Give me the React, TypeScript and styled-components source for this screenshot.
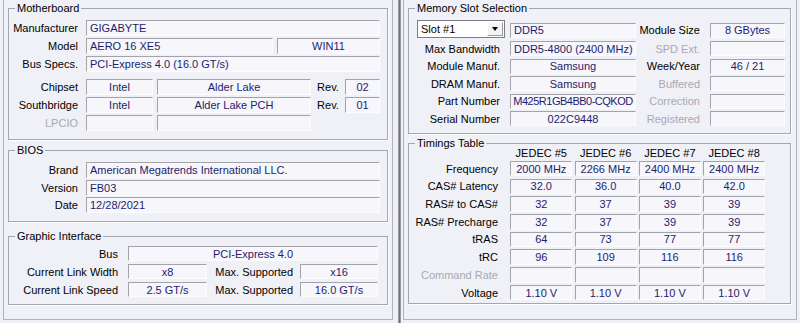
import React from 'react';
import styled, { createGlobalStyle } from 'styled-components';

const GlobalStyle = createGlobalStyle`
  html, body { margin: 0; padding: 0; background: #f0f0f7; }
  body { font-family: "Liberation Sans", Arial, sans-serif; font-size: 11px; color: #000; }
  * { box-sizing: border-box; }
`;

const Screen = styled.div`
  display: flex;
  width: 800px;
  height: 323px;
  overflow: hidden;
  background: #f0f0f7;
`;

const Side = styled.div<{ $w: number }>`
  width: ${p => p.$w}px;
  flex: none;
  display: flex;
  height: 100%;
`;

const Divider = styled.div`
  width: 3px;
  flex: none;
  background: linear-gradient(to right, #a9a9b1, #74747c, #a9a9b1);
`;

const TabPage = styled.div<{ $ml: number; $mr: number; $pr: number }>`
  margin: 0 ${p => p.$mr}px 0 ${p => p.$ml}px;
  flex: 1;
  height: 320px;
  border: 1px solid #b2b2ba;
  border-top: none;
  padding: 0 ${p => p.$pr}px 0 4px;
  display: flex;
  flex-direction: column;
`;

const Group = styled.fieldset<{ $mt: number; $h: number; $pt: number }>`
  margin: ${p => p.$mt}px 0 0 0;
  height: ${p => p.$h}px;
  padding: ${p => p.$pt}px 0 0 0;
  border: 1px solid #a6a6ae;
  box-shadow: 1px 1px 0 #ffffff;
  min-width: 0;
  flex: none;
`;

const Legend = styled.legend`
  margin-left: 6px;
  padding: 0 2px;
  line-height: 10px;
  font-size: 11px;
  color: #000;
`;

const Row = styled.div<{ $h?: number; $mb?: number; $pr?: number }>`
  display: flex;
  align-items: center;
  height: ${p => p.$h ?? 16}px;
  margin-bottom: ${p => p.$mb ?? 2}px;
  padding-right: ${p => p.$pr ?? 7}px;
`;

const Label = styled.div<{ $w?: number; $pr?: number; $dis?: boolean; $center?: boolean }>`
  ${p => (p.$w ? `width: ${p.$w}px; flex: none;` : '')}
  text-align: ${p => (p.$center ? 'center' : 'right')};
  padding-right: ${p => p.$pr ?? 8}px;
  white-space: nowrap;
  color: ${p => (p.$dis ? '#a9a9b0' : '#000')};
`;

const Field = styled.div<{ $w?: number; $ml?: number; $align?: 'left' | 'center'; $tight?: boolean }>`
  ${p => (p.$w ? `width: ${p.$w}px; flex: none;` : 'flex: 1;')}
  margin-left: ${p => p.$ml ?? 0}px;
  height: 100%;
  border-top: 1px solid #a3a3ab;
  border-left: 1px solid #a3a3ab;
  border-bottom: 1px solid #fdfdff;
  border-right: 1px solid #fdfdff;
  background: #f6f6fb;
  color: #1d1d6e;
  display: flex;
  align-items: center;
  justify-content: ${p => (p.$align === 'center' ? 'center' : 'flex-start')};
  padding: 0 3px;
  white-space: nowrap;
  overflow: hidden;
  letter-spacing: ${p => (p.$tight ? '-0.5px' : 'normal')};
`;

const MemGrid = styled.div`
  display: grid;
  grid-template-columns: 93px 126px 74px 75px;
  grid-template-rows: 20px repeat(5, 17.5px);
  padding-left: 8px;
  align-items: center;
`;

const GridLabel = styled.div<{ $dis?: boolean }>`
  text-align: right;
  padding-right: 10px;
  white-space: nowrap;
  color: ${p => (p.$dis ? '#a9a9b0' : '#000')};
`;

const GridField = styled(Field)`
  height: 15px;
  flex: none;
`;

const Select = styled.div`
  width: 88px;
  height: 18px;
  align-self: start;
  background: #ffffff;
  border: 1px solid #7c7c84;
  display: flex;
  align-items: center;
  padding-left: 3px;
  color: #000;
`;

const SelectButton = styled.div`
  margin-left: auto;
  margin-right: 1px;
  width: 16px;
  height: 14px;
  background: #f4f4f4;
  border: 1px solid;
  border-color: #ffffff #9a9a9a #9a9a9a #ffffff;
  display: flex;
  align-items: center;
  justify-content: center;
`;

const Arrow = styled.div`
  width: 0;
  height: 0;
  border-left: 3.5px solid transparent;
  border-right: 3.5px solid transparent;
  border-top: 4px solid #000;
`;

const TimGrid = styled.div`
  display: grid;
  grid-template-columns: 99px repeat(4, 62px);
  column-gap: 2.3px;
  grid-template-rows: 10.8px repeat(8, 15.5px);
  row-gap: 2.2px;
  align-items: center;
`;

const Head = styled.div`
  text-align: center;
  line-height: 10.8px;
  white-space: nowrap;
  color: #000;
`;

const Cell = styled(Field)`
  justify-content: center;
`;

const timings: { label: string; dis?: boolean; values: string[] }[] = [
  { label: 'Frequency', values: ['2000 MHz', '2266 MHz', '2400 MHz', '2400 MHz'] },
  { label: 'CAS# Latency', values: ['32.0', '36.0', '40.0', '42.0'] },
  { label: 'RAS# to CAS#', values: ['32', '37', '39', '39'] },
  { label: 'RAS# Precharge', values: ['32', '37', '39', '39'] },
  { label: 'tRAS', values: ['64', '73', '77', '77'] },
  { label: 'tRC', values: ['96', '109', '116', '116'] },
  { label: 'Command Rate', dis: true, values: ['', '', '', ''] },
  { label: 'Voltage', values: ['1.10 V', '1.10 V', '1.10 V', '1.10 V'] },
];

export default function App() {
  return (
    <>
      <GlobalStyle />
      <Screen>
        <Side $w={398}>
          <TabPage $ml={3} $mr={5} $pr={4}>
            <Group $mt={3} $h={137} $pt={7}>
              <Legend>Motherboard</Legend>
              <Row>
                <Label $w={77}>Manufacturer</Label>
                <Field>GIGABYTE</Field>
              </Row>
              <Row>
                <Label $w={77}>Model</Label>
                <Field $w={187}>AERO 16 XE5</Field>
                <Field $w={103} $ml={4} $align="center">WIN11</Field>
              </Row>
              <Row $mb={7}>
                <Label $w={77}>Bus Specs.</Label>
                <Field>PCI-Express 4.0 (16.0 GT/s)</Field>
              </Row>
              <Row>
                <Label $w={77}>Chipset</Label>
                <Field $w={67} $align="center">Intel</Field>
                <Field $w={154} $ml={4} $align="center">Alder Lake</Field>
                <Label $w={34} $pr={0} $center>Rev.</Label>
                <Field $w={35} $align="center">02</Field>
              </Row>
              <Row>
                <Label $w={77}>Southbridge</Label>
                <Field $w={67} $align="center">Intel</Field>
                <Field $w={154} $ml={4} $align="center">Alder Lake PCH</Field>
                <Label $w={34} $pr={0} $center>Rev.</Label>
                <Field $w={35} $align="center">01</Field>
              </Row>
              <Row>
                <Label $w={77} $dis>LPCIO</Label>
                <Field $w={67} />
                <Field $w={154} $ml={4} />
              </Row>
            </Group>

            <Group $mt={5} $h={77} $pt={7}>
              <Legend>BIOS</Legend>
              <Row $mb={1.5}>
                <Label $w={77}>Brand</Label>
                <Field>American Megatrends International LLC.</Field>
              </Row>
              <Row $mb={1.5}>
                <Label $w={77}>Version</Label>
                <Field>FB03</Field>
              </Row>
              <Row $mb={1.5}>
                <Label $w={77}>Date</Label>
                <Field>12/28/2021</Field>
              </Row>
            </Group>

            <Group $mt={9} $h={74} $pt={5}>
              <Legend>Graphic Interface</Legend>
              <Row $h={15} $mb={3} $pr={9}>
                <Label $w={119} $pr={10}>Bus</Label>
                <Field $align="center">PCI-Express 4.0</Field>
              </Row>
              <Row $h={15} $mb={3} $pr={9}>
                <Label $w={119} $pr={10}>Current Link Width</Label>
                <Field $w={79} $align="center">x8</Field>
                <Label $w={93} $pr={7}>Max. Supported</Label>
                <Field $w={78} $align="center">x16</Field>
              </Row>
              <Row $h={15} $mb={3} $pr={9}>
                <Label $w={119} $pr={10}>Current Link Speed</Label>
                <Field $w={79} $align="center">2.5 GT/s</Field>
                <Label $w={93} $pr={7}>Max. Supported</Label>
                <Field $w={78} $align="center">16.0 GT/s</Field>
              </Row>
            </Group>
          </TabPage>
        </Side>

        <Divider />

        <Side $w={399}>
          <TabPage $ml={2} $mr={3} $pr={5}>
            <Group $mt={3} $h={131} $pt={7}>
              <Legend>Memory Slot Selection</Legend>
              <MemGrid>
                <Select>
                  Slot #1
                  <SelectButton>
                    <Arrow />
                  </SelectButton>
                </Select>
                <GridField>DDR5</GridField>
                <GridLabel>Module Size</GridLabel>
                <GridField $align="center">8 GBytes</GridField>

                <GridLabel>Max Bandwidth</GridLabel>
                <GridField>DDR5-4800 (2400 MHz)</GridField>
                <GridLabel $dis>SPD Ext.</GridLabel>
                <GridField />

                <GridLabel>Module Manuf.</GridLabel>
                <GridField $align="center">Samsung</GridField>
                <GridLabel>Week/Year</GridLabel>
                <GridField $align="center">46 / 21</GridField>

                <GridLabel>DRAM Manuf.</GridLabel>
                <GridField $align="center">Samsung</GridField>
                <GridLabel $dis>Buffered</GridLabel>
                <GridField />

                <GridLabel>Part Number</GridLabel>
                <GridField $align="center" $tight>M425R1GB4BB0-CQKOD</GridField>
                <GridLabel $dis>Correction</GridLabel>
                <GridField />

                <GridLabel>Serial Number</GridLabel>
                <GridField $align="center">022C9448</GridField>
                <GridLabel $dis>Registered</GridLabel>
                <GridField />
              </MemGrid>
            </Group>

            <Group $mt={4} $h={166} $pt={0}>
              <Legend>Timings Table</Legend>
              <TimGrid>
                <div />
                <Head>JEDEC #5</Head>
                <Head>JEDEC #6</Head>
                <Head>JEDEC #7</Head>
                <Head>JEDEC #8</Head>
                {timings.map(t => (
                  <React.Fragment key={t.label}>
                    <GridLabel $dis={t.dis}>{t.label}</GridLabel>
                    {t.values.map((v, i) => (
                      <Cell key={i}>{v}</Cell>
                    ))}
                  </React.Fragment>
                ))}
              </TimGrid>
            </Group>
          </TabPage>
        </Side>
      </Screen>
    </>
  );
}
